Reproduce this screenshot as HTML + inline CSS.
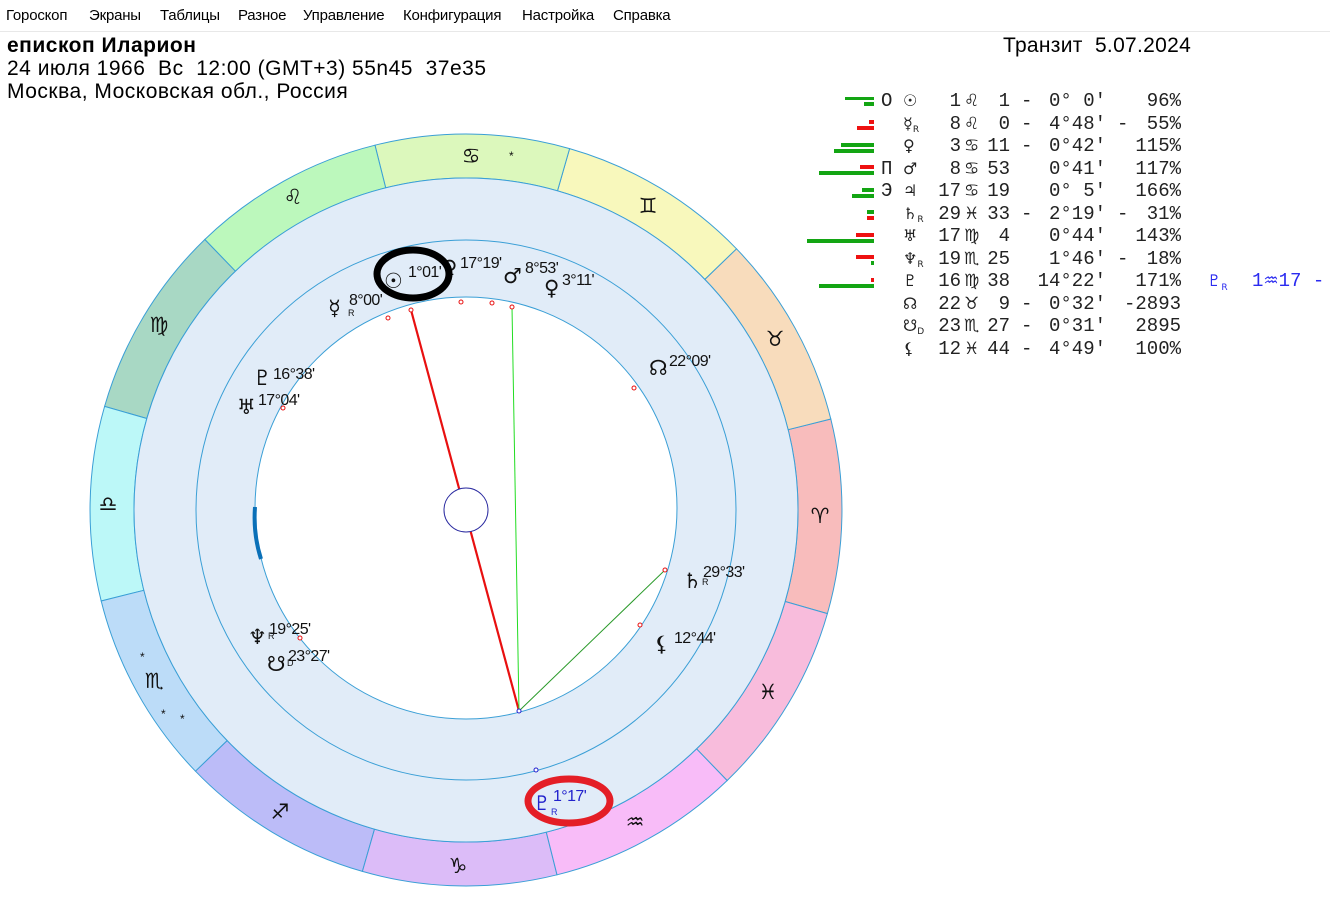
<!DOCTYPE html>
<html><head><meta charset="utf-8"><style>
html,body{margin:0;padding:0;width:1330px;height:906px;background:#fff;overflow:hidden;font-family:"Liberation Sans","DejaVu Sans",sans-serif;}
.m{position:absolute;top:7px;font-size:15px;color:#000;letter-spacing:-0.2px}
.bar{position:absolute;top:0;left:0;width:1330px;height:31px;border-bottom:1px solid #e8e8e8}
.h{position:absolute;font-size:21px;color:#000;white-space:nowrap;letter-spacing:0.5px}
.r{position:absolute;left:0;width:1330px;height:22px;font-family:"Liberation Mono","DejaVu Sans Mono",monospace;font-size:19px;color:#222;line-height:22px;white-space:pre}
.r span{position:absolute;top:0}
.r .gl{font-family:"DejaVu Sans",sans-serif;font-size:16px;left:903px}
.r .gl sub{font-size:9px;vertical-align:-3px;line-height:0}
.r .d{right:369px;text-align:right}
.r .s{left:964px;font-family:"DejaVu Sans",sans-serif;font-size:17px}
.r .mi{right:320px;text-align:right}
.r .x1{left:1021px}
.r .o{right:224px;text-align:right}
.r .x2{left:1117px}
.r .p{right:149px;text-align:right}
.r .e{left:881px}
.b{position:absolute;height:4px}
.gr{background:#13a513}.rd{background:#ee1111}
</style></head><body>
<div class="bar"></div>
<span class="m" style="left:6px">Гороскоп</span>
<span class="m" style="left:89px">Экраны</span>
<span class="m" style="left:160px">Таблицы</span>
<span class="m" style="left:238px">Разное</span>
<span class="m" style="left:303px">Управление</span>
<span class="m" style="left:403px">Конфигурация</span>
<span class="m" style="left:522px">Настройка</span>
<span class="m" style="left:613px">Справка</span>

<div class="h" style="left:7px;top:34px;font-weight:bold">епископ Иларион</div>
<div class="h" style="left:7px;top:57px">24 июля 1966&nbsp; Вс&nbsp; 12:00 (GMT+3) 55n45&nbsp; 37e35</div>
<div class="h" style="left:7px;top:80px">Москва, Московская обл., Россия</div>
<div class="h" style="left:1003px;top:34px;letter-spacing:0.3px">Транзит&nbsp; 5.07.2024</div>

<!-- bars -->
<div class="b gr" style="left:845px;top:97px;width:29px;height:3px"></div>
<div class="b gr" style="left:864px;top:102px;width:10px"></div>
<div class="b rd" style="left:869px;top:120px;width:5px"></div>
<div class="b rd" style="left:857px;top:126px;width:17px"></div>
<div class="b gr" style="left:841px;top:143px;width:33px"></div>
<div class="b gr" style="left:834px;top:149px;width:40px"></div>
<div class="b rd" style="left:860px;top:165px;width:14px"></div>
<div class="b gr" style="left:819px;top:171px;width:55px"></div>
<div class="b gr" style="left:862px;top:188px;width:12px"></div>
<div class="b gr" style="left:852px;top:194px;width:22px"></div>
<div class="b gr" style="left:867px;top:210px;width:7px"></div>
<div class="b rd" style="left:867px;top:216px;width:7px"></div>
<div class="b rd" style="left:856px;top:233px;width:18px"></div>
<div class="b gr" style="left:807px;top:239px;width:67px"></div>
<div class="b rd" style="left:856px;top:255px;width:18px"></div>
<div class="b gr" style="left:871px;top:261px;width:3px"></div>
<div class="b rd" style="left:871px;top:278px;width:3px"></div>
<div class="b gr" style="left:819px;top:284px;width:55px"></div>

<div class="r" style="top:90px"><span class="e">О</span><span class="gl">☉</span><span class="d">1</span><span class="s">♌</span><span class="mi">1</span><span class="x1">-</span><span class="o">0° 0'</span><span class="p">96%</span></div>
<div class="r" style="top:112.5px"><span class="gl">☿<sub>R</sub></span><span class="d">8</span><span class="s">♌</span><span class="mi">0</span><span class="x1">-</span><span class="o">4°48'</span><span class="x2">-</span><span class="p">55%</span></div>
<div class="r" style="top:135px"><span class="gl">♀</span><span class="d">3</span><span class="s">♋</span><span class="mi">11</span><span class="x1">-</span><span class="o">0°42'</span><span class="p">115%</span></div>
<div class="r" style="top:157.5px"><span class="e">П</span><span class="gl">♂</span><span class="d">8</span><span class="s">♋</span><span class="mi">53</span><span class="o">0°41'</span><span class="p">117%</span></div>
<div class="r" style="top:180px"><span class="e">Э</span><span class="gl">♃</span><span class="d">17</span><span class="s">♋</span><span class="mi">19</span><span class="o">0° 5'</span><span class="p">166%</span></div>
<div class="r" style="top:202.5px"><span class="gl">♄<sub>R</sub></span><span class="d">29</span><span class="s">♓</span><span class="mi">33</span><span class="x1">-</span><span class="o">2°19'</span><span class="x2">-</span><span class="p">31%</span></div>
<div class="r" style="top:225px"><span class="gl">♅</span><span class="d">17</span><span class="s">♍</span><span class="mi">4</span><span class="o">0°44'</span><span class="p">143%</span></div>
<div class="r" style="top:247.5px"><span class="gl">♆<sub>R</sub></span><span class="d">19</span><span class="s">♏</span><span class="mi">25</span><span class="o">1°46'</span><span class="x2">-</span><span class="p">18%</span></div>
<div class="r" style="top:270px"><span class="gl">♇</span><span class="d">16</span><span class="s">♍</span><span class="mi">38</span><span class="o">14°22'</span><span class="p">171%</span><span style="left:1207px;color:#2b2bf0;font-family:'DejaVu Sans';font-size:16px">♇<sub style="font-size:9px">R</sub></span><span style="left:1252px;color:#2b2bf0">1<span style="position:static;font-family:'DejaVu Sans';font-size:17px">♒</span>17 -</span></div>
<div class="r" style="top:292.5px"><span class="gl">☊</span><span class="d">22</span><span class="s">♉</span><span class="mi">9</span><span class="x1">-</span><span class="o">0°32'</span><span class="p">-2893</span></div>
<div class="r" style="top:315px"><span class="gl">☋<sub>D</sub></span><span class="d">23</span><span class="s">♏</span><span class="mi">27</span><span class="x1">-</span><span class="o">0°31'</span><span class="p">2895</span></div>
<div class="r" style="top:337.5px"><span class="gl">⚸</span><span class="d">12</span><span class="s">♓</span><span class="mi">44</span><span class="x1">-</span><span class="o">4°49'</span><span class="p">100%</span></div>

<svg style="position:absolute;left:0;top:0" width="1330" height="906" font-family="Liberation Sans, DejaVu Sans, sans-serif">
<g stroke="#3a9fd6" stroke-width="1">
<path d="M827.4,613.6 A376,376 0 0 0 830.8,419 L788.1,429.7 A332,332 0 0 1 785.2,601.5Z" fill="#f8bcbc"/>
<path d="M830.8,419 A376,376 0 0 0 736.5,248.8 L704.8,279.4 A332,332 0 0 1 788.1,429.7Z" fill="#f8dcbc"/>
<path d="M736.5,248.8 A376,376 0 0 0 569.6,148.6 L557.5,190.8 A332,332 0 0 1 704.8,279.4Z" fill="#f8f8bc"/>
<path d="M569.6,148.6 A376,376 0 0 0 375,145.2 L385.7,187.9 A332,332 0 0 1 557.5,190.8Z" fill="#dcf8bc"/>
<path d="M375,145.2 A376,376 0 0 0 204.8,239.5 L235.4,271.2 A332,332 0 0 1 385.7,187.9Z" fill="#bcf8bc"/>
<path d="M204.8,239.5 A376,376 0 0 0 104.6,406.4 L146.8,418.5 A332,332 0 0 1 235.4,271.2Z" fill="#a8d8c4"/>
<path d="M104.6,406.4 A376,376 0 0 0 101.2,601 L143.9,590.3 A332,332 0 0 1 146.8,418.5Z" fill="#bcf8f8"/>
<path d="M101.2,601 A376,376 0 0 0 195.5,771.2 L227.2,740.6 A332,332 0 0 1 143.9,590.3Z" fill="#bcdcf8"/>
<path d="M195.5,771.2 A376,376 0 0 0 362.4,871.4 L374.5,829.2 A332,332 0 0 1 227.2,740.6Z" fill="#bcbcf8"/>
<path d="M362.4,871.4 A376,376 0 0 0 557,874.8 L546.3,832.1 A332,332 0 0 1 374.5,829.2Z" fill="#dcbcf8"/>
<path d="M557,874.8 A376,376 0 0 0 727.2,780.5 L696.6,748.8 A332,332 0 0 1 546.3,832.1Z" fill="#f8bcf8"/>
<path d="M727.2,780.5 A376,376 0 0 0 827.4,613.6 L785.2,601.5 A332,332 0 0 1 696.6,748.8Z" fill="#f8bcdc"/>
<circle cx="466" cy="510" r="332" fill="#e1ecf8"/>
<circle cx="466" cy="510" r="270" fill="none"/>
<circle cx="466" cy="508" r="211" fill="#fff"/>
</g>
<g font-family="DejaVu Sans, sans-serif" font-size="21" text-anchor="middle" fill="#111">
<text x="820" y="523">♈</text><text x="775" y="346">♉</text><text x="648" y="213">♊</text>
<text x="471" y="163">♋</text><text x="293" y="204">♌</text><text x="159" y="332">♍</text>
<text x="108" y="511">♎</text><text x="154" y="688">♏</text><text x="280" y="819">♐</text>
<text x="458" y="873">♑</text><text x="635" y="829">♒</text><text x="768" y="699">♓</text>
</g>
<g font-size="12" fill="#111"><text x="509" y="160">*</text><text x="140" y="661">*</text><text x="161" y="718">*</text><text x="180" y="723">*</text></g>
<path d="M411,310 L519,711" stroke="#e81010" stroke-width="2.2"/>
<path d="M512,307 L519,711" stroke="#22dd22" stroke-width="1"/>
<path d="M519,711 L665,570" stroke="#2a9a2a" stroke-width="1"/>
<circle cx="466" cy="510" r="22" fill="#fff" stroke="#2a2aa0" stroke-width="1"/>
<path d="M255,507 Q253,534 261,559" stroke="#0a70b8" stroke-width="4" fill="none"/>
<g fill="#fff" stroke="#e81010" stroke-width="1">
<circle cx="388" cy="318" r="2"/><circle cx="411" cy="310" r="2"/><circle cx="461" cy="302" r="2"/><circle cx="492" cy="303" r="2"/><circle cx="512" cy="307" r="2"/><circle cx="634" cy="388" r="2"/><circle cx="283" cy="408" r="2"/><circle cx="665" cy="570" r="2"/><circle cx="640" cy="625" r="2"/><circle cx="300" cy="638" r="2"/></g>
<circle cx="519" cy="711" r="2" fill="#fff" stroke="#2020d0"/>
<circle cx="536" cy="770" r="2" fill="#fff" stroke="#2020d0"/>
<g font-size="21" fill="#111" font-family="DejaVu Sans, sans-serif">
<text x="384" y="288">☉</text><text x="442" y="275">♀</text><text x="503" y="283">♂</text><text x="544" y="295">♀</text>
<text x="328" y="315">☿</text><text x="253" y="385">♇</text><text x="237" y="414">♅</text><text x="649" y="375">☊</text>
<text x="683" y="588">♄</text><text x="654" y="651">⚸</text><text x="248" y="644">♆</text><text x="267" y="671">☋</text>
</g>
<g font-size="9" fill="#111"><text x="348" y="316">R</text><text x="702" y="585">R</text><text x="268" y="639">R</text><text x="287" y="666">D</text></g>
<g font-size="16" fill="#111" letter-spacing="-0.6">
<text x="408" y="277">1°01'</text><text x="460" y="268">17°19'</text><text x="525" y="273">8°53'</text><text x="562" y="285">3°11'</text>
<text x="349" y="305">8°00'</text><text x="273" y="379">16°38'</text><text x="258" y="405">17°04'</text><text x="669" y="366">22°09'</text>
<text x="703" y="577">29°33'</text><text x="674" y="643">12°44'</text><text x="269" y="634">19°25'</text><text x="288" y="661">23°27'</text>
</g>
<text x="533" y="810" font-size="20" fill="#2222cc" font-family="DejaVu Sans">♇</text>
<text x="551" y="815" font-size="9" fill="#2222cc">R</text>
<text x="553" y="801" font-size="16" fill="#2222cc" letter-spacing="-0.6">1°17'</text>
<ellipse cx="413" cy="274" rx="36" ry="24" fill="none" stroke="#000" stroke-width="7"/>
<ellipse cx="569" cy="801" rx="41" ry="22" fill="none" stroke="#e41e26" stroke-width="7"/>
</svg>
</body></html>
